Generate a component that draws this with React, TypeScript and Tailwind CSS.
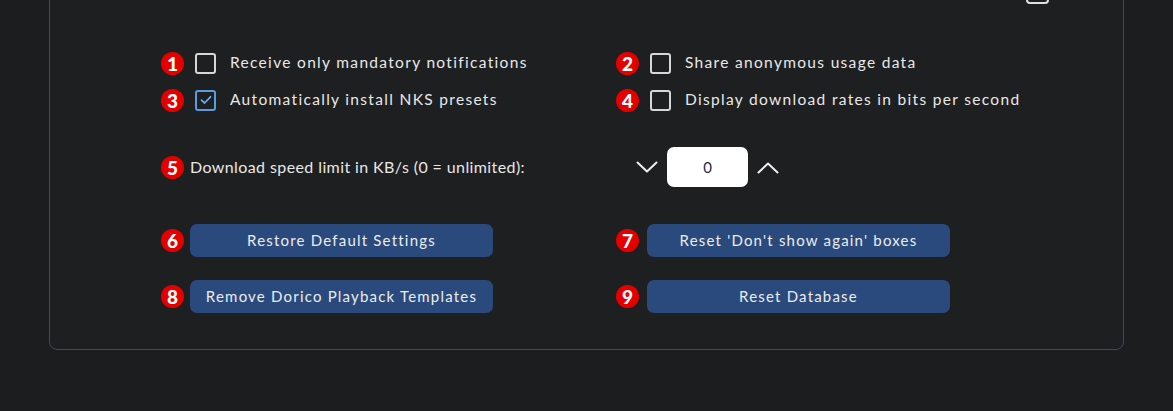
import { ReactNode } from 'react';

const font = { fontFamily: 'Lato, "Open Sans", sans-serif' };

function Badge({ n }: { n: number }) {
  return (
    <div className="w-[23px] h-[23px] rounded-full bg-[#e50000] flex items-center justify-center shrink-0">
      <span className="text-white text-[19px] font-black leading-none">{n}</span>
    </div>
  );
}

function Checkbox({ checked }: { checked?: boolean }) {
  return (
    <div
      className={`w-[21px] h-[21px] rounded-[3px] border-2 shrink-0 flex items-center justify-center ${
        checked ? 'border-[#5b9be0]' : 'border-[#d6d6d6]'
      }`}
    >
      {checked && (
        <svg width="12" height="10" viewBox="0 0 12 10" fill="none">
          <path d="M1.5 5.2 L4.6 8 L10.5 1.8" stroke="#6aa8ee" strokeWidth="1.8" strokeLinecap="round" strokeLinejoin="round" />
        </svg>
      )}
    </div>
  );
}

function CheckRow({ n, label, checked }: { n: number; label: string; checked?: boolean }) {
  return (
    <div className="flex items-center h-[22px]">
      <Badge n={n} />
      <div className="ml-[11px]">
        <Checkbox checked={checked} />
      </div>
      <span className="ml-[14px] text-[15.5px] text-[#e8e8e8] tracking-[0.085em] whitespace-nowrap">{label}</span>
    </div>
  );
}

function ButtonRow({ n, children, gap }: { n: number; children: ReactNode; gap: string }) {
  return (
    <div className="flex items-center h-[33px]">
      <Badge n={n} />
      <button
        className={`${gap} w-[303px] h-[33px] rounded-[7px] bg-[#2a4a7d] text-[#ececec] text-[15px] tracking-[0.08em] whitespace-nowrap`}
      >
        {children}
      </button>
    </div>
  );
}

function Chevron({ up }: { up?: boolean }) {
  return (
    <svg width="22" height="13" viewBox="0 0 22 13" fill="none">
      <path
        d={up ? 'M1.5 11.5 L11 2.5 L20.5 11.5' : 'M1.5 1.5 L11 10.5 L20.5 1.5'}
        stroke="#eeeeee"
        strokeWidth="2"
        strokeLinecap="round"
        strokeLinejoin="round"
      />
    </svg>
  );
}

export default function App() {
  return (
    <div className="w-[1173px] h-[411px] bg-[#1c1d1e] overflow-hidden px-[49px]" style={font}>
      {/* パネル */}
      <div className="-mt-[20px] border border-[#3a4b63] rounded-b-[8px] bg-[#1e1f20] pl-[111px] pb-[36px]">
        <div className="flex justify-end pr-[74px]">
          <div className="w-[23px] h-[23px] rounded-[4px] border-2 border-[#e0e0e0]" />
        </div>

        <div className="grid grid-cols-[455px_auto] mt-[48px] gap-y-[15px]">
          <CheckRow n={1} label="Receive only mandatory notifications" />
          <CheckRow n={2} label="Share anonymous usage data" />
          <CheckRow n={3} label="Automatically install NKS presets" checked />
          <CheckRow n={4} label="Display download rates in bits per second" />
        </div>

        {/* ダウンロード速度 */}
        <div className="grid grid-cols-[455px_auto] mt-[36px] h-[40px]">
          <div className="flex items-center">
            <Badge n={5} />
            <span className="ml-[6px] text-[16px] text-[#e8e8e8] tracking-[0.025em] whitespace-nowrap">
              Download speed limit in KB/s (0 = unlimited):
            </span>
          </div>
          <div className="flex items-center pl-[20px] gap-[9px]">
            <Chevron />
            <div className="w-[81px] h-[40px] rounded-[7px] bg-white flex items-center justify-center">
              <span className="text-[15px] text-[#1a2a44]">0</span>
            </div>
            <Chevron up />
          </div>
        </div>

        <div className="grid grid-cols-[455px_auto] mt-[37px] gap-y-[23px]">
          <ButtonRow n={6} gap="ml-[6px]">Restore Default Settings</ButtonRow>
          <ButtonRow n={7} gap="ml-[8px]">Reset 'Don't show again' boxes</ButtonRow>
          <ButtonRow n={8} gap="ml-[6px]">Remove Dorico Playback Templates</ButtonRow>
          <ButtonRow n={9} gap="ml-[8px]">Reset Database</ButtonRow>
        </div>
      </div>
    </div>
  );
}
